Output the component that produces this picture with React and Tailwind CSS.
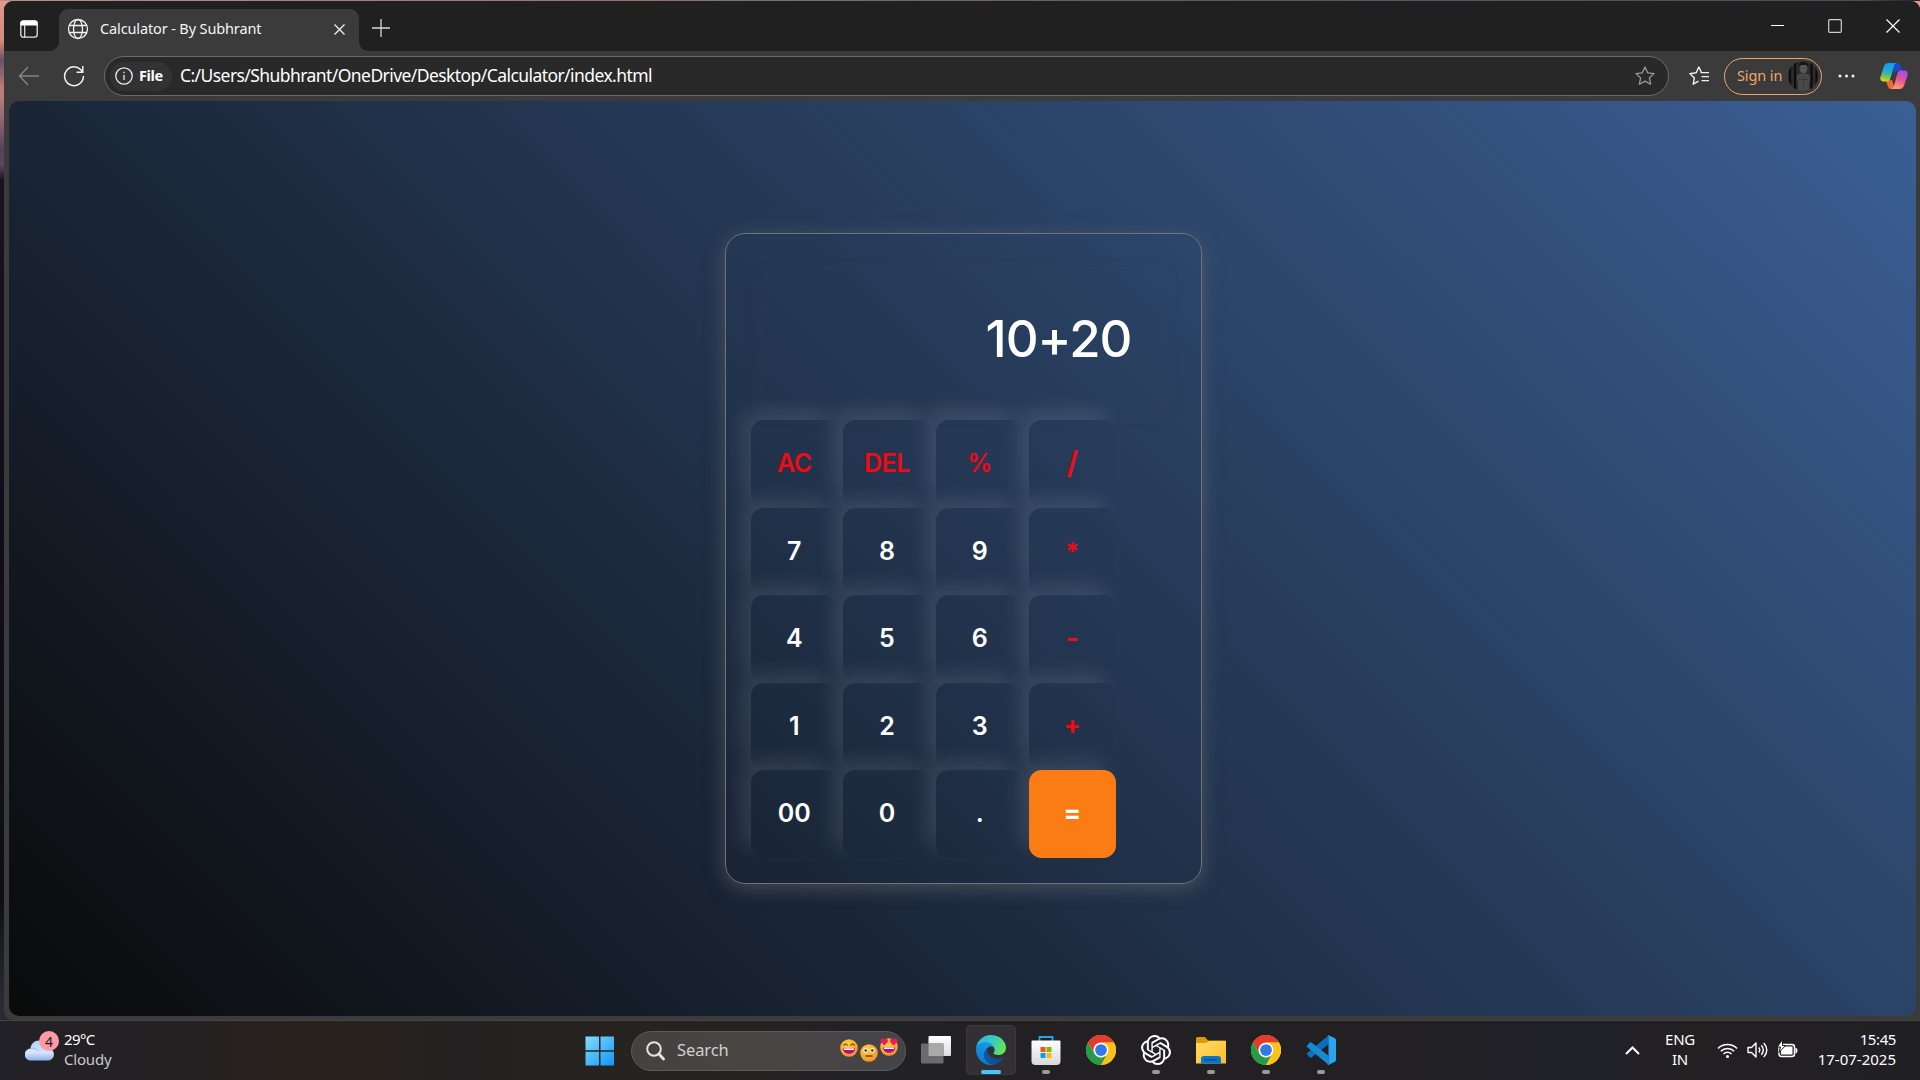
import React from "react";
import { SiOpenai } from "react-icons/si";

const keys = [
  ["AC", "DEL", "%", "/"],
  ["7", "8", "9", "*"],
  ["4", "5", "6", "-"],
  ["1", "2", "3", "+"],
  ["00", "0", ".", "="],
];
const letters = new Set(["AC", "DEL", "%"]);

function Key({ label }) {
  const base =
    "h-[87.5px] w-[87.5px] shrink-0 rounded-[12.5px] flex items-center justify-center shadow-[-10px_-10px_19px_rgba(255,255,255,0.1)]";
  let tone = "text-white text-[25px] font-[560]";
  if (label === "=") tone = "bg-[#fb7c14] text-white text-[26px] font-bold pb-[3px]";
  else if (letters.has(label)) tone = "text-[#f00a12] text-[25px] font-[560] tracking-[-0.5px]";
  else if (label === "/") tone = "text-[#f00a12] text-[31px] font-[560] pb-[2px]";
  else if (label === "*") tone = "text-[#f00a12] text-[25px] font-bold pt-[2px]";
  else if (label === "-") tone = "text-[#f00a12] text-[29px] font-semibold pb-[3px]";
  else if (label === "+") tone = "text-[#f00a12] text-[25px] font-bold pb-[2px]";
  return (
    <button className={`${base} ${tone}`}>
      <span>{label}</span>
    </button>
  );
}

function Calculator() {
  return (
    <div className="ml-px h-[651px] w-[477px] rounded-[20px] border border-[#717377] px-[25px] pt-[37px] shadow-[0_4px_19px_rgba(113,115,119,0.5)] font-['Inter',sans-serif]">
      <div className="ml-[12px] flex h-[137px] w-[400px] items-center justify-end pb-[3px] pr-[31px] text-[51px] font-[540] leading-none tracking-[-1px] text-white shadow-[0_4px_19px_rgba(84,84,84,0.1)]">
        10+20
      </div>
      <div className="mt-[12px] flex flex-col">
        {keys.map((row) => (
          <div key={row[0]} className="flex gap-[5.2px]">
            {row.map((k) => (
              <Key key={k} label={k} />
            ))}
          </div>
        ))}
      </div>
    </div>
  );
}

function TabStrip() {
  return (
    <div className="flex h-[50px] shrink-0 bg-[#202020]">
      <div className="flex w-[55px] shrink-0 items-center pl-[16px] pt-[6px]">
        <svg width="18" height="18" viewBox="0 0 18 18" fill="none">
          <rect x="0.8" y="0.8" width="16.4" height="16.4" rx="2.6" stroke="#e6e6e6" strokeWidth="1.3" />
          <path d="M.5 5.500V3A2.500 2.500 0 0 1 3 .5h12A2.500 2.500 0 0 1 17.500 3v2.500z" fill="#fff" />
          <path d="M4.700 5v12.500" stroke="#e6e6e6" strokeWidth="1.200" />
        </svg>
      </div>
      <div className="relative mt-[8px] flex w-[300px] shrink-0 items-center rounded-t-[9px] bg-[#3b3b3b] pb-[2px] pl-[8px]">
        <svg className="absolute -left-[9px] bottom-0" width="9" height="9"><path d="M9 0v9H0A9 9 0 0 0 9 0z" fill="#3b3b3b" /></svg>
        <svg className="absolute -right-[9px] bottom-0" width="9" height="9"><path d="M0 0v9h9A9 9 0 0 1 0 0z" fill="#3b3b3b" /></svg>
        <svg width="22" height="22" viewBox="0 0 22 22" fill="none" stroke="#f2f2f2" strokeWidth="1.300">
          <circle cx="11" cy="11" r="9.500" />
          <ellipse cx="11" cy="11" rx="4.500" ry="9.500" />
          <path d="M2.300 7.500h17.400M2.300 14.500h17.400" />
        </svg>
        <span className="ml-[11px] mt-[-1px] w-[180px] whitespace-nowrap text-[14.5px] tracking-[-0.13px] text-[#f5f5f5]">Calculator - By Subhrant</span>
        <svg className="ml-[54px]" width="11" height="11" viewBox="0 0 11 11" stroke="#f2f2f2" strokeWidth="1.300"><path d="M.5.5l10 10M10.500.5l-10 10" /></svg>
      </div>
      <svg className="ml-[13px] mt-[18px]" width="18" height="18" stroke="#d8d8d8" strokeWidth="1.300"><path d="M9 0v18M0 9h18" /></svg>
      <div className="ml-auto flex pr-[20px] pt-[18px]">
        <svg width="129" height="14" viewBox="0 0 129 14" fill="none" stroke="#fff" strokeWidth="1.200">
          <path d="M0 6.500h13" />
          <rect x="57.700" y="0.7" width="12.600" height="12.600" rx="1" stroke="#d0d0d0" />
          <path d="M115.500 .5l13 13M128.500.5l-13 13" />
        </svg>
      </div>
    </div>
  );
}

function Copilot() {
  return (
    <svg width="28" height="26" viewBox="0 0 28 26">
      <defs>
        <linearGradient id="cpA" x1="0.400" y1="0" x2="0.200" y2="1">
          <stop offset="0" stopColor="#149cf0" /><stop offset="0.450" stopColor="#21b0c8" /><stop offset="0.750" stopColor="#7dc64f" /><stop offset="1" stopColor="#f5d416" />
        </linearGradient>
        <linearGradient id="cpB" x1="0.700" y1="0" x2="0.300" y2="1">
          <stop offset="0" stopColor="#a24bea" /><stop offset="0.500" stopColor="#ec5590" /><stop offset="1" stopColor="#fca26a" />
        </linearGradient>
      </defs>
      <path d="M13 0h4.500c1.500 0 2.300 1 2.800 2.600L22 8h-4c-2 0-3 1-3.600 3z" fill="#1648d0" />
      <path d="M6 18l6-1 3 9h-4c-1.600 0-2.500-.8-3-2.500z" fill="#f4683a" />
      <path d="M8.500 0H17c-1.500 0-2.300 1-2.900 3l-3.700 12.500c-.6 2-1.600 3-3.400 3H3.500C1 18.500-.3 16.500.4 14L3.900 3.500C4.600 1.200 6 0 8.500 0z" fill="url(#cpA)" />
      <path d="M19.500 26H11c1.500 0 2.300-1 2.900-3l3.500-12.500c.6-2 1.700-3 3.500-3h3.600c2.500 0 3.800 2 3.100 4.500L24.100 22.500c-.7 2.300-2.200 3.500-4.600 3.500z" fill="url(#cpB)" />
    </svg>
  );
}

function Toolbar() {
  return (
    <div className="flex h-[50px] shrink-0 items-center bg-[#3b3b3b]">
      <svg className="ml-[14px]" width="22" height="20" viewBox="0 0 22 20" fill="none" stroke="#858585" strokeWidth="1.400"><path d="M21 10H1.500M10 1L1.500 10l8.500 9" /></svg>
      <svg className="ml-[23px]" width="22" height="22" viewBox="0 0 22 22" fill="none" stroke="#f0f0f0" strokeWidth="1.500"><path d="M19.400 7A9.400 9.400 0 1 0 20.400 11M19.800 1v6.300h-6.300" /></svg>
      <div className="ml-[19px] flex h-[40px] w-[1565px] shrink-0 items-center rounded-full border border-[#6b6b6b] bg-[#292929] pl-[5px] pr-[13px]">
        <div className="flex h-[29px] w-[62px] items-center rounded-full bg-[#323232] pl-[5px]">
          <svg width="18" height="18" viewBox="0 0 18 18" fill="none" stroke="#ececec" strokeWidth="1.300"><circle cx="9" cy="9" r="8.200" /><path d="M9 8v5M9 4.800v1.500" /></svg>
          <span className="ml-[6px] pb-px text-[14.5px] font-bold tracking-[-0.4px] text-white">File</span>
        </div>
        <span className="ml-[8px] whitespace-nowrap pb-[2px] text-[17.5px] tracking-[-0.57px] text-white">C:/Users/Shubhrant/OneDrive/Desktop/Calculator/index.html</span>
        <svg className="ml-auto" width="20" height="20" viewBox="0 0 20 20" fill="none" stroke="#9a9a9a" strokeWidth="1.300" strokeLinejoin="round"><path d="M10 1l2.700 5.800 6.300.8-4.600 4.300 1.200 6.300L10 15.100l-5.600 3.100 1.200-6.300L1 7.600l6.300-.8z" /></svg>
      </div>
      <svg className="ml-[20px]" width="20" height="20" viewBox="0 0 20 20" fill="none" stroke="#f2f2f2" strokeWidth="1.400" strokeLinejoin="round"><path d="M12.500 6.500L9.800 1 7.200 6.800.8 7.600l4.600 4.300-1.200 6.300 5.300-3M11.500 6.600H20M12.500 10.600H20M12.500 14.600H20" /></svg>
      <div className="ml-[15px] flex h-[37px] w-[98px] shrink-0 items-center rounded-full border-[1.500px] border-[#f0a468] pl-[12px]">
        <span className="w-[48px] whitespace-nowrap text-[14.5px] tracking-[-0.1px] text-[#f0a468]">Sign in</span>
        <svg className="ml-[3px]" width="30" height="30" viewBox="0 0 30 30">
          <clipPath id="av"><circle cx="15" cy="15" r="15" /></clipPath>
          <g clipPath="url(#av)">
            <rect width="30" height="30" fill="#2c2c2c" />
            <path d="M7 0v30M23.500 0v30M28.500 0v30M2 0v30" stroke="#0c0c0c" strokeWidth="2.200" />
            <path d="M8.500 15l4-2.500h6l4 2.500-1.500 8 .5 7h-12l.5-6z" fill="#484848" />
            <ellipse cx="15.500" cy="7.500" rx="3.800" ry="4.800" fill="#585858" />
            <path d="M10.500 5.500c0-6 10-6 10 0l-2.500-1.500h-5z" fill="#161616" />
            <path d="M13.500 7.200h1M16.800 7.200h1M15.500 15v10M11 18.500h9" stroke="#383838" />
          </g>
        </svg>
      </div>
      <svg className="ml-[16px]" width="17" height="4" fill="#f2f2f2"><circle cx="2" cy="2" r="1.500" /><circle cx="8.500" cy="2" r="1.500" /><circle cx="15" cy="2" r="1.500" /></svg>
      <div className="ml-[25px]"><Copilot /></div>
    </div>
  );
}

function Emoji({ kind }) {
  return (
    <svg width="18" height="18" viewBox="0 0 18 18">
      <defs><radialGradient id={`em-${kind}`} cx=".4" cy=".3" r=".8"><stop offset="0" stopColor="#ffd33e" /><stop offset="1" stopColor="#f58a22" /></radialGradient></defs>
      <circle cx="9" cy="9" r="8.800" fill={`url(#em-${kind})`} />
      {kind === "flat" ? (
        <g><circle cx="5.500" cy="6.500" r="2.200" fill="#fff" /><circle cx="12.500" cy="6.500" r="2.200" fill="#fff" /><circle cx="5.700" cy="6.500" r="1.300" fill="#3d2340" /><circle cx="12.300" cy="6.500" r="1.300" fill="#3d2340" /><path d="M5.500 12h7" stroke="#6b3520" strokeWidth="1.400" /></g>
      ) : (
        <g><path d="M3 9.500h12c0 7-12 7-12 0z" fill="#b00b8c" /><path d="M4 9.500h10v1.500H4z" fill="#fff" /></g>
      )}
      {kind === "grin" && <path d="M3.500 6.500q2-3 4 0M10.500 6.500q2-3 4 0" fill="none" stroke="#5b2b2b" strokeWidth="1.200" />}
      {kind === "love" && <path d="M4.300 7.500L.5 3.500C-.5 0 3.500-.5 4.300 1.800 6-.5 9 1.500 7.500 4.300zM13.700 7.500l3.800-4C18.500 0 14.500-.5 13.700 1.800 12-.5 9 1.500 10.500 4.300z" fill="#f2185d" />}
    </svg>
  );
}

function Chrome() {
  return (
    <svg width="30" height="30" viewBox="0 0 48 48">
      <circle cx="24" cy="24" r="24" fill="#fcc21b" />
      <path d="M3.200 12A24 24 0 0 1 44.800 12H24A12 12 0 0 0 13.600 30z" fill="#e33b2e" />
      <path d="M3.200 12A24 24 0 0 0 24 48L34.400 30A12 12 0 0 1 13.600 30z" fill="#269b48" />
      <path d="M44.800 12A24 24 0 0 1 24 48L34.400 30A12 12 0 0 0 24 12z" fill="#fcc21b" />
      <circle cx="24" cy="24" r="11.800" fill="#fff" /><circle cx="24" cy="24" r="9.400" fill="#3279ea" />
    </svg>
  );
}

function Edge() {
  return (
    <svg width="30" height="30" viewBox="0 0 256 256">
      <defs>
        <linearGradient id="eA" x1="0" y1="0.500" x2="1" y2="0.500"><stop offset="0" stopColor="#0c59a4" /><stop offset="1" stopColor="#114a8b" /></linearGradient>
        <linearGradient id="eB" x1="0.600" y1="0" x2="0.200" y2="1"><stop offset="0" stopColor="#1b9de2" /><stop offset="1" stopColor="#0877d2" /></linearGradient>
        <linearGradient id="eC" x1="0" y1="0.300" x2="1" y2="0.600"><stop offset="0" stopColor="#35b5e9" /><stop offset="0.500" stopColor="#36c9c6" /><stop offset="1" stopColor="#66e84f" /></linearGradient>
      </defs>
      <path d="M231 190.500c-3.400 1.800-6.900 3.400-10.500 4.700a101.900 101.900 0 0 1-35.900 6.500c-47.300 0-88.500-32.500-88.500-74.300.1-11.400 6.400-21.900 16.400-27.300-42.800 1.800-53.800 46.400-53.800 72.500 0 73.900 68.100 81.400 82.800 81.400 7.900 0 19.800-2.300 27-4.600l1.300-.4a128.300 128.300 0 0 0 66.600-52.800 4 4 0 0 0-5.400-5.700z" fill="url(#eA)" />
      <path d="M105.700 241.400A79.200 79.200 0 0 1 83 220.100 80.700 80.700 0 0 1 112.500 100c3.200-1.500 8.500-4.100 15.600-4a32.400 32.400 0 0 1 25.700 13 31.900 31.900 0 0 1 6.300 18.700c0-.2 24.500-79.600-80-79.600-43.900 0-80 41.600-80 78.200A130.200 130.200 0 0 0 12.100 182a128 128 0 0 0 156.400 67.100 75.500 75.500 0 0 1-62.800-7.700z" fill="url(#eB)" />
      <path d="M152.300 148.900c-.9 1-3.400 2.500-3.400 5.700 0 2.600 1.700 5.200 4.800 7.300 14.400 10.100 41.700 8.700 41.800 8.700 10.700 0 21.300-2.900 30.500-8.400A61.800 61.800 0 0 0 256 109.100c.3-22.400-8-37.300-11.300-43.900C223.500 23.900 177.700 0 128 0A128 128 0 0 0 0 126.200c.5-36.500 36.800-66 80-66 3.500 0 23.500.3 42 10.100 16.300 8.600 24.900 18.900 30.800 29.200 6.200 10.700 7.300 24.100 7.300 29.500s-2.700 13.300-7.800 19.900z" fill="url(#eC)" />
    </svg>
  );
}

function Store() {
  return (
    <svg width="30" height="30" viewBox="0 0 30 30">
      <defs><linearGradient id="st" x2="0" y2="1"><stop stopColor="#fff" /><stop offset="1" stopColor="#d8d8d8" /></linearGradient></defs>
      <path d="M8.500 6V2h13v4" fill="none" stroke="#22a7e8" strokeWidth="1.800" />
      <path d="M.5 6.500q0-1 1-1h27q1 0 1 1V26a4 4 0 0 1-4 4h-21a4 4 0 0 1-4-4z" fill="url(#st)" />
      <path d="M9.500 12h5v5h-5z" fill="#f1511b" /><path d="M15.500 12h5v5h-5z" fill="#80b900" /><path d="M9.500 18h5v5h-5z" fill="#00a3ee" /><path d="M15.500 18h5v5h-5z" fill="#fdb813" />
    </svg>
  );
}

function Folder() {
  return (
    <svg width="30" height="27" viewBox="0 0 30 27">
      <defs><linearGradient id="fo" x2="1" y2="1"><stop stopColor="#ffdc68" /><stop offset="1" stopColor="#fbbd28" /></linearGradient></defs>
      <path d="M0 1.500Q0 0 1.500 0H9l3 3.500h17q1 0 1 1V10H0z" fill="#dd9a06" />
      <path d="M0 6h10l3-2h17v22.500H0z" fill="url(#fo)" />
      <path d="M5 26.500V22q0-3 3-3h14q3 0 3 3v4.500z" fill="#0c74cd" /><path d="M8.500 22.800h13" stroke="#0a4c91" strokeWidth="1.400" />
    </svg>
  );
}

function VSCode() {
  return (
    <svg width="30" height="30" viewBox="0 0 100 100">
      <path d="M3 63l9 12q4 2 7-1l56-43V2L2 62z" fill="#0a6fbc" />
      <path d="M3 37l9-12q4-2 7 1l56 43v30L2 38z" fill="#168bd2" />
      <path d="M75.900 99.100a6.200 6.200 0 0 1-7.100-1.200c2.300 2.300 6.200.7 6.200-2.600V4.700c0-3.300-3.900-4.900-6.200-2.600A6.200 6.200 0 0 1 75.900.9l20.600 9.900A6.200 6.200 0 0 1 100 16.400v67.200a6.200 6.200 0 0 1-3.500 5.600z" fill="#2ba4f0" />
    </svg>
  );
}

function AppIcon({ children, active, dot = true }) {
  const bar = active ? "h-[4px] w-[20px] rounded-full bg-[#4cc2ff]" : dot ? "h-[4px] w-[8px] rounded-full bg-[#9a9a9a]" : "h-[4px] w-[8px]";
  return (
    <div className="flex h-[50px] w-[55px] shrink-0 justify-center">
      <div className={`flex w-[50px] flex-col items-center rounded-[5px] ${active ? "bg-[#323033] ring-1 ring-inset ring-[#3b393c]" : ""}`}>
        <div className="flex h-[45px] items-center pt-[5px]">{children}</div>
        <div className={bar} />
      </div>
    </div>
  );
}

function Taskbar() {
  return (
    <div className="flex h-[60px] w-full shrink-0 items-center border-t border-[#454545] bg-[linear-gradient(90deg,#222127_0%,#252122_10%,#2a231d_17%,#242122_24%,#272320_34%,#222124_45%,#222022_70%,#202028_83%,#232022_88%,#202024_100%)]">
      <div className="flex w-[585px] shrink-0 items-center pl-[25px]">
        <div className="relative mb-[9px] h-[30px] w-[39px]">
          <svg className="absolute left-0 top-[9px]" width="30" height="21" viewBox="0 0 30 21">
            <defs><linearGradient id="cl" x2="0" y2="1"><stop stopColor="#b5d2fb" /><stop offset=".6" stopColor="#d6e5fb" /><stop offset="1" stopColor="#8bb0ea" /></linearGradient></defs>
            <path d="M6 20.500a6 6 0 0 1-.500-12C6 3.500 9.500 .5 14 .5S22 3.500 23 8.200a6.200 6.200 0 0 1 .8 12.300z" fill="url(#cl)" />
            <path d="M5.500 8.500c4-1 6 .5 8 3" stroke="#95b6e8" fill="none" />
          </svg>
          <div className="absolute left-[14px] top-0 flex h-[20px] w-[20px] items-center justify-center rounded-full bg-[#ff99a4] text-[14px] text-[#1a1a1a]">4</div>
        </div>
        <div className="mb-[3px] flex flex-col text-[15px] leading-[20px] tracking-[-0.6px]"><span className="text-white">29°C</span><span className="tracking-[-0.2px] text-[#c8c8c8]">Cloudy</span></div>
      </div>
      <svg width="30" height="30" viewBox="0 0 30 30">
        <defs><linearGradient id="wi" gradientUnits="userSpaceOnUse" x1="0" y1="0" x2="30" y2="30"><stop stopColor="#86defc" /><stop offset="1" stopColor="#0c94f8" /></linearGradient></defs>
        <path d="M.5.5H14v13.700H.5zM15.500.5H29v13.700H15.500zM.5 15.700H14v13.700H.5zM15.500 15.700H29v13.700H15.500z" fill="url(#wi)" />
      </svg>
      <div className="ml-[16px] flex h-[40px] w-[275px] shrink-0 items-center rounded-full border border-[#5b5959] bg-[linear-gradient(90deg,#444241,#484542_45%,#444348)] pl-[14px] pr-[7px]">
        <svg width="19" height="20" viewBox="0 0 19 20" fill="none" stroke="#e4e4e4"><circle cx="8" cy="8" r="6.800" strokeWidth="2" /><path d="M13 13l4.500 5" strokeWidth="2.800" strokeLinecap="round" /></svg>
        <span className="ml-[12px] text-[16.5px] tracking-[-0.1px] text-[#d2d0d0]">Search</span>
        <div className="ml-auto flex gap-[2px]"><div><Emoji kind="grin" /></div><div className="pt-[5px]"><Emoji kind="flat" /></div><div className="-mt-[1px]"><Emoji kind="love" /></div></div>
      </div>
      <div className="mb-px ml-[2px] flex">
        <AppIcon dot={false}>
          <svg width="30" height="28" viewBox="0 0 30 28"><defs><linearGradient id="tv" x2="0" y2="1"><stop stopColor="#fff" /><stop offset="1" stopColor="#dcdcdc" /></linearGradient></defs><rect x="7.500" width="22.500" height="20" rx="1" fill="url(#tv)" /><rect y="7.500" width="22.500" height="20" rx="1" fill="#6b6b6b" /><path d="M7.500 7.500h15V20h-15z" fill="#a9a9a9" /></svg>
        </AppIcon>
        <AppIcon active><Edge /></AppIcon>
        <AppIcon><Store /></AppIcon>
        <AppIcon dot={false}><Chrome /></AppIcon>
        <AppIcon><SiOpenai size={30} color="#fff" /></AppIcon>
        <AppIcon><Folder /></AppIcon>
        <AppIcon><Chrome /></AppIcon>
        <AppIcon><VSCode /></AppIcon>
      </div>
      <div className="ml-auto flex items-center pb-px pr-[24px] text-[15px] leading-[20px] text-white">
        <svg width="15" height="9" viewBox="0 0 15 9" fill="none" stroke="#fff" strokeWidth="2"><path d="M1 8l6.500-6.500L14 8" /></svg>
        <div className="mb-[2px] ml-[19px] flex w-[42px] flex-col items-center tracking-[-0.3px]"><span>ENG</span><span>IN</span></div>
        <svg className="ml-[16px]" width="21" height="17" viewBox="0 0 21 17" fill="none" stroke="#fff" strokeWidth="1.500"><path d="M1 6.500a13.400 13.400 0 0 1 19 0M3.800 9.300a9.500 9.500 0 0 1 13.400 0M6.500 12a5.600 5.600 0 0 1 8 0" /><circle cx="10.500" cy="14.500" r="1.500" fill="#fff" stroke="none" /></svg>
        <svg className="ml-[9px]" width="21" height="18" viewBox="0 0 21 18" fill="none" stroke="#fff" strokeWidth="1.400" strokeLinejoin="round"><path d="M1 6.500h3.500L9 2v14l-4.500-4.500H1zM11.800 6.500q2 2.500 0 5M14.300 4.300q4 4.700 0 9.400M16.800 2q6 7 0 14" /></svg>
        <svg className="mb-[2px] ml-[9px]" width="21" height="18" viewBox="0 0 21 18"><rect x="2" y="4.500" width="15.500" height="12" rx="2.500" fill="none" stroke="#fff" strokeWidth="1.500" /><path d="M4 6.500h11.500v8H4z" fill="#fff" /><path d="M18.500 7.800q2 0 2 2.700t-2 2.700z" fill="#fff" /><path d="M5.500 -.5L.3 7h3.200l-1.500 5.500L8.500 5.500h-3z" fill="#fff" stroke="#222" strokeWidth="1" /></svg>
        <div className="mb-[2px] ml-[18px] flex w-[80px] flex-col items-end whitespace-nowrap"><span className="tracking-[-0.4px]">15:45</span><span className="tracking-[0px]">17-07-2025</span></div>
      </div>
    </div>
  );
}

export default function App() {
  return (
    <div className="flex h-[1080px] w-[1920px] flex-col overflow-hidden bg-[linear-gradient(180deg,#e09a8c_0px,#d48c7c_40px,#6a5064_60px,#c08078_90px,#9a6c78_115px,#54405c_150px,#5c4662_165px,#1a1220_180px,#120c18_500px,#100e14_900px,#2a2a34_1000px)] font-['Noto_Sans',sans-serif]">
      <div className="h-px shrink-0 bg-[linear-gradient(90deg,#c08a80,#a07a78_25%,#5c5c64_60%,#4c4c58_97%,#201c38)]" />
      <div className="ml-[4px] flex h-[1019px] shrink-0 flex-col overflow-hidden rounded-t-[9px] rounded-bl-[9px] bg-[#3b3b3b]">
        <TabStrip />
        <Toolbar />
        <div className="ml-[5px] mr-[4px] flex h-[915px] shrink-0 items-center justify-center rounded-[10px] bg-[linear-gradient(45deg,#0a0a0a,#3b5f94)]">
          <Calculator />
        </div>
      </div>
      <Taskbar />
    </div>
  );
}
